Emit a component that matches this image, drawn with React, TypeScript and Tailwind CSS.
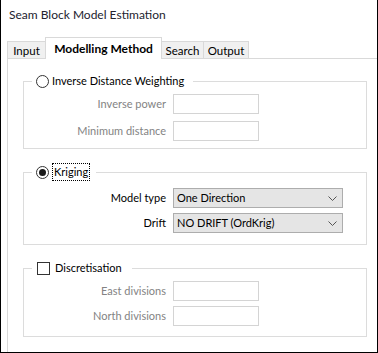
import React from "react";

function Radio({ checked }: { checked?: boolean }) {
  return (
    <span className="flex h-[13px] w-[13px] shrink-0 items-center justify-center rounded-full border border-[#333333] bg-white">
      {checked && <span className="h-[7px] w-[7px] rounded-full bg-[#1a1a1a]" />}
    </span>
  );
}

function Chevron() {
  return (
    <svg width="9" height="5" viewBox="0 0 9 5" className="shrink-0">
      <polyline points="0.5,0.5 4.5,4.5 8.5,0.5" fill="none" stroke="#555555" strokeWidth="1" />
    </svg>
  );
}

function Field({ label }: { label: string }) {
  return (
    <>
      <span className="text-right text-[#838383]">{label}</span>
      <div className="h-[20px] w-[86px] border border-[#d4d4d4] bg-white" />
    </>
  );
}

function Select({ label, value }: { label: string; value: string }) {
  return (
    <>
      <span className="text-right text-black">{label}</span>
      <div className="flex h-[20px] w-[170px] items-center justify-between border border-[#adadad] bg-[#e5e5e5] pl-[3px] pr-[5px] text-black">
        <span>{value}</span>
        <Chevron />
      </div>
    </>
  );
}

export default function App() {
  const tabs = ["Input", "Modelling Method", "Search", "Output"];
  const widths: Record<string, string> = {
    Input: "w-[39px]",
    "Modelling Method": "w-[117px]",
    Search: "w-[43px]",
    Output: "w-[46px]",
  };

  return (
    <div className="flex h-[353px] w-[378px] flex-col border-x border-b border-black bg-white font-['Lato',sans-serif] text-[11px] leading-4 text-black">
      <div className="h-[37px] pl-[8px] pt-[7px] text-[12px] text-[#22222e]">Seam Block Model Estimation</div>

      <div className="flex h-[21px] items-end pl-[6px]">
        {tabs.map((t, i) => {
          const active = t === "Modelling Method";
          return (
            <div
              key={t}
              className={`${widths[t]} ${i > 0 ? "-ml-px" : ""} flex justify-center border-x border-t border-[#d9d9d9] ${
                active
                  ? "relative z-10 -mb-px h-[22px] bg-white pt-[3px] text-[12px] font-bold"
                  : "h-[17px] bg-[#f0f0f0] pt-px text-[11.5px]"
              }`}
            >
              {t}
            </div>
          );
        })}
      </div>

      <div className="ml-[6px] flex-1 border-l border-t border-[#d9d9d9] pl-[15px] pt-[14px]">
        <fieldset className="w-[344px] border border-[#dcdcdc] px-0 pb-[7px] pt-[5px]">
          <legend className="ml-[8px] flex items-center gap-[3px] pl-[4px] pr-[9px]">
            <Radio />
            <span>Inverse Distance Weighting</span>
          </legend>
          <div className="grid grid-cols-[142px_86px] items-center gap-x-[7px] gap-y-[7px]">
            <Field label="Inverse power" />
            <Field label="Minimum distance" />
          </div>
        </fieldset>

        <fieldset className="mt-[14px] w-[344px] border border-[#dcdcdc] px-0 pb-[11px] pt-[7px]">
          <legend className="ml-[8px] flex items-center gap-[3px] pl-[4px] pr-[6px]">
            <Radio checked />
            <span className="border border-dotted border-black px-px">Kriging</span>
          </legend>
          <div className="grid grid-cols-[142px_170px] items-center gap-x-[7px] gap-y-[5px]">
            <Select label="Model type" value="One Direction" />
            <Select label="Drift" value="NO DRIFT (OrdKrig)" />
          </div>
        </fieldset>

        <fieldset className="mt-[15px] w-[344px] border border-[#dcdcdc] px-0 pb-[10px] pt-[5px]">
          <legend className="ml-[8px] flex items-center gap-[5px] pl-[5px] pr-[10px]">
            <span className="h-[13px] w-[13px] border border-[#333333] bg-white" />
            <span>Discretisation</span>
          </legend>
          <div className="grid grid-cols-[142px_86px] items-center gap-x-[7px] gap-y-[5px]">
            <Field label="East divisions" />
            <Field label="North divisions" />
          </div>
        </fieldset>
      </div>
    </div>
  );
}
